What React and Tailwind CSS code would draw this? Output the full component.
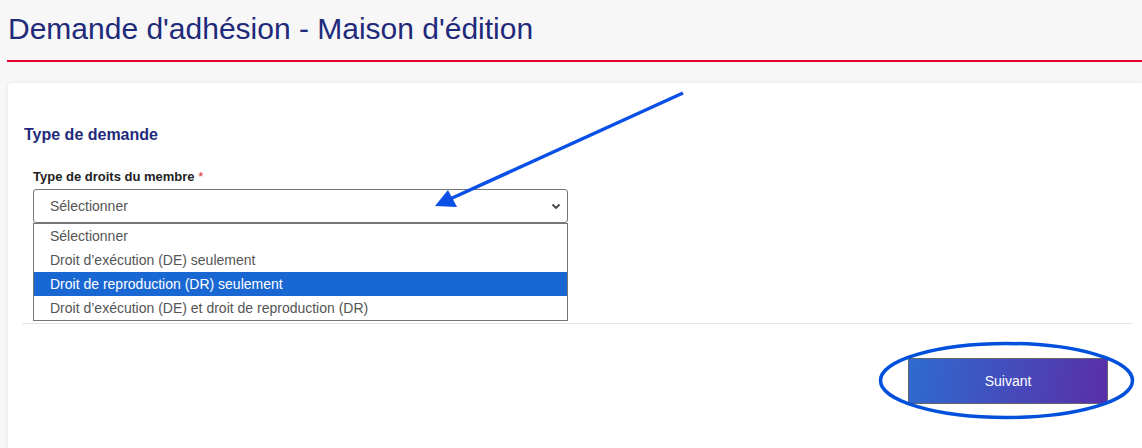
import React from "react";

const options = [
  "Sélectionner",
  "Droit d’exécution (DE) seulement",
  "Droit de reproduction (DR) seulement",
  "Droit d’exécution (DE) et droit de reproduction (DR)",
];

const Chevron = () => (
  <svg width="10" height="7" viewBox="0 0 10 7" className="text-[#444]">
    <path d="M1.5 1.5 L5 5 L8.5 1.5" fill="none" stroke="currentColor" strokeWidth="1.8" />
  </svg>
);

export default function App() {
  return (
    <div className="relative h-[448px] w-[1142px] overflow-hidden bg-[#f7f7f7] font-['Liberation_Sans',Arial,sans-serif]">
      {/* Header */}
      <div className="pl-[8px] pt-[10px]">
        <h1 className="text-[30px] leading-[38px] text-[#1f2a7a]">
          Demande d'adhésion - Maison d'édition
        </h1>
      </div>
      <div className="ml-[7px] mt-[12px] h-[2px] bg-[#e4002b]" />

      {/* Card */}
      <div className="ml-[8px] mt-[21px] h-[400px] rounded-tl-[4px] bg-white pl-[16px] pr-[9px] pt-[43px] shadow-[0_0_4px_rgba(0,0,0,0.08)]">
        <h2 className="text-[16px] font-bold leading-[18px] text-[#1f2a7a]">Type de demande</h2>

        <div className="ml-[9px] mt-[25px] w-[535px]">
          <label className="block text-[13px] font-bold leading-[15px] text-[#222]">
            Type de droits du membre <span className="font-normal text-[#d33]">*</span>
          </label>
          <div className="mt-[5px] flex h-[34px] items-center justify-between rounded-[3px] border border-[#767676] pl-[16px] pr-[6px] text-[14px] text-[#555]">
            <span>Sélectionner</span>
            <Chevron />
          </div>
          <div className="border border-[#767676] text-[14px] text-[#555]">
            {options.map((o, i) => (
              <div
                key={o}
                className={`h-[24px] pl-[16px] leading-[24px] ${i === 2 ? "bg-[#1967d2] text-white" : ""}`}
              >
                {o}
              </div>
            ))}
          </div>
        </div>

        <div className="ml-[-2px] mt-[2px] h-[1px] w-[1111px] bg-[#e5e5e5]" />

        <div className="flex w-[1084px] justify-end pt-[34px]">
          <button className="h-[46px] w-[200px] border border-[#666] bg-[linear-gradient(100deg,#2e6bd0,#5a2ea8)] text-[14px] text-white">
            Suivant
          </button>
        </div>
      </div>

      {/* Annotation overlay */}
      <svg className="pointer-events-none absolute left-0 top-0" width="1142" height="448">
        <line x1="683" y1="93" x2="450" y2="199" stroke="#0a50e6" strokeWidth="3.5" />
        <polygon points="435,206 448,190 457,207" fill="#0a50e6" />
        <ellipse cx="1006.5" cy="380.5" rx="126" ry="37" fill="none" stroke="#0050dc" strokeWidth="3.5" />
      </svg>
    </div>
  );
}
